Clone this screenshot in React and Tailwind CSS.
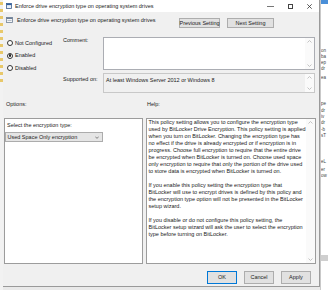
import React from "react";

const helpParas = [
  [
    "This policy setting allows you to configure the encryption type",
    "used by BitLocker Drive Encryption. This policy setting is applied",
    "when you turn on BitLocker. Changing the encryption type has",
    "no effect if the drive is already encrypted or if encryption is in",
    "progress. Choose full encryption to require that the entire drive",
    "be encrypted when BitLocker is turned on. Choose used space",
    "only encryption to require that only the portion of the drive used",
    "to store data is encrypted when BitLocker is turned on.",
  ],
  [
    "If you enable this policy setting the encryption type that",
    "BitLocker will use to encrypt drives is defined by this policy and",
    "the encryption type option will not be presented in the BitLocker",
    "setup wizard.",
  ],
  [
    "If you disable or do not configure this policy setting, the",
    "BitLocker setup wizard will ask the user to select the encryption",
    "type before turning on BitLocker.",
  ],
];

const bgFragments = [
  { y: 50, t: "on" },
  { y: 56, t: "ba" },
  { y: 62, t: "ep" },
  { y: 68, t: "dr" },
  { y: 77, t: "ea" },
  { y: 103, t: "pe" },
  { y: 110, t: "dr" },
  { y: 116, t: "iv" },
  { y: 122, t: "dr" },
  { y: 129, t: "-b" },
  { y: 135, t: "sT" },
  { y: 161, t: "eL" },
  { y: 169, t: "er" },
  { y: 175, t: "ow" },
];

function ScrollArrows({ h }) {
  return (
    <div className="w-[9px] flex flex-col justify-between items-center py-[2px] bg-[#fafafa]" style={{ height: h }}>
      <svg width="5" height="3" viewBox="0 0 5 3">
        <path d="M0.5 2.5 L2.5 0.5 L4.5 2.5" fill="none" stroke="#b5b5b5" strokeWidth="0.8" />
      </svg>
      <svg width="5" height="3" viewBox="0 0 5 3">
        <path d="M0.5 0.5 L2.5 2.5 L4.5 0.5" fill="none" stroke="#b5b5b5" strokeWidth="0.8" />
      </svg>
    </div>
  );
}

function Radio({ label, checked }) {
  return (
    <div className="flex items-center h-[7px]">
      <div className="w-[6px] h-[6px] rounded-full border border-[#333] bg-white flex items-center justify-center">
        {checked && <div className="w-[2.5px] h-[2.5px] rounded-full bg-[#222]" />}
      </div>
      <span className="ml-[2px] whitespace-nowrap">{label}</span>
    </div>
  );
}

function Btn({ children, w, primary }) {
  return (
    <div
      className={`h-[10px] flex items-center justify-center bg-[#e1e1e1] border ${
        primary ? "border-[#0078d7]" : "border-[#adadad]"
      } whitespace-nowrap`}
      style={{ width: w }}
    >
      {children}
    </div>
  );
}

export default function App() {
  return (
    <div className="w-[328px] h-[290px] overflow-hidden flex bg-[#e9e9e9] font-['Liberation_Sans',Arial,sans-serif] text-[5.5px] leading-[7px] text-[#222]">
      {/* left background strip */}
      <div className="w-[3px] h-full bg-[#f2f2f2] flex flex-col gap-[4px] pt-[2px]">
        {Array.from({ length: 12 }).map((_, i) => (
          <div key={i} className="w-[3px] h-[3px] bg-[#e8c86a]" />
        ))}
      </div>

      {/* dialog window */}
      <div className="w-[317px] h-[287px] flex flex-col bg-[#f0f0f0] border-r border-b border-[#9a9a9a]">
        {/* title bar */}
        <div className="h-[12px] bg-white flex items-center pl-[3px] shrink-0">
          <svg width="6" height="6" viewBox="0 0 6 6">
            <rect x="0.5" y="0.5" width="5" height="5" fill="#e8eef6" stroke="#3d5f8f" strokeWidth="0.8" />
            <rect x="0.5" y="0.5" width="5" height="1.6" fill="#2f5f9f" />
          </svg>
          <span className="ml-[3px] whitespace-nowrap">Enforce drive encryption type on operating system drives</span>
          <div className="ml-auto flex items-center pr-[7px]">
            <div className="w-[7px] h-[1px] bg-[#777]" />
            <div className="ml-[14px] w-[5px] h-[5px] border border-[#444]" />
            <svg className="ml-[14px]" width="5" height="5" viewBox="0 0 5 5">
              <path d="M0.3 0.3 L4.7 4.7 M4.7 0.3 L0.3 4.7" stroke="#333" strokeWidth="0.8" />
            </svg>
          </div>
        </div>

        {/* header row */}
        <div className="h-[18px] flex items-start pl-[3px] shrink-0">
          <svg className="mt-[5px]" width="7" height="6" viewBox="0 0 7 6">
            <rect x="0.5" y="0.5" width="6" height="5" fill="#f4f4f4" stroke="#6d7f96" strokeWidth="0.8" />
            <rect x="0.5" y="0.5" width="6" height="1.5" fill="#6d7f96" />
            <rect x="1.5" y="3" width="4" height="0.7" fill="#9aa6b6" />
          </svg>
          <span className="ml-[4px] mt-[4.5px] whitespace-nowrap">
            Enforce drive encryption type on operating system drives
          </span>
          <div className="ml-auto mt-[6px] flex gap-[7px] pr-[45px]">
            <Btn w={41}>Previous Setting</Btn>
            <Btn w={47}>Next Setting</Btn>
          </div>
        </div>

        {/* state + comment section */}
        <div className="flex shrink-0">
          <div className="w-[60px] flex flex-col pl-[4px] pt-[9.5px] gap-[5.5px]">
            <Radio label="Not Configured" />
            <Radio label="Enabled" checked />
            <Radio label="Disabled" />
          </div>
          <div className="flex flex-col">
            <div className="flex mt-[7px]">
              <div className="w-[40px] whitespace-nowrap">Comment:</div>
              <div className="w-[212px] h-[33px] bg-white border border-[#abadb3] flex justify-end">
                <ScrollArrows h={31} />
              </div>
            </div>
            <div className="flex mt-[3px]">
              <div className="w-[40px] mt-[3px] whitespace-nowrap">Supported on:</div>
              <div className="w-[212px] h-[20px] bg-[#f0f0f0] border border-[#c8c8c8] flex">
                <div className="flex-1 pl-[2px] pt-[3px] whitespace-nowrap">
                  At least Windows Server 2012 or Windows 8
                </div>
                <ScrollArrows h={18} />
              </div>
            </div>
          </div>
        </div>

        {/* labels */}
        <div className="flex mt-[7.5px] h-[7px] shrink-0">
          <div className="w-[144px] pl-[3px]">Options:</div>
          <div>Help:</div>
        </div>

        {/* panes */}
        <div className="flex mt-[10.5px] h-[146px] shrink-0">
          <div className="ml-[1px] w-[139px] h-full bg-white border border-[#9c9c9c] flex flex-col">
            <div className="pl-[2px] pt-[2.5px] whitespace-nowrap">Select the encryption type:</div>
            <div className="mt-[3.5px] w-[98px] h-[10px] bg-[#e5e5e5] border border-[#acacac] flex items-center pl-[1.5px] pr-[3px]">
              <span className="whitespace-nowrap">Used Space Only encryption</span>
              <svg className="ml-auto" width="4" height="3" viewBox="0 0 4 3">
                <path d="M0.3 0.6 L2 2.4 L3.7 0.6" fill="none" stroke="#555" strokeWidth="0.7" />
              </svg>
            </div>
          </div>
          <div className="ml-[3px] w-[170px] h-full bg-white border border-[#9c9c9c] flex">
            <div className="flex-1 pl-[1.5px] pt-[0px] flex flex-col gap-[7px]">
              {helpParas.map((p, i) => (
                <div key={i}>
                  {p.map((l, j) => (
                    <div key={j} className="whitespace-nowrap">
                      {l}
                    </div>
                  ))}
                </div>
              ))}
            </div>
            <ScrollArrows h={144} />
          </div>
        </div>

        {/* bottom buttons */}
        <div className="flex-1 flex items-start justify-end pr-[8px] pt-[7px] gap-[7px]">
          <div className="w-[30px] h-[13px] flex items-center justify-center bg-[#e1e1e1] border border-[#0078d7]">OK</div>
          <div className="w-[30px] h-[13px] flex items-center justify-center bg-[#e1e1e1] border border-[#adadad]">Cancel</div>
          <div className="w-[30px] h-[13px] flex items-center justify-center bg-[#e1e1e1] border border-[#adadad]">Apply</div>
        </div>
      </div>

      {/* right background window */}
      <div className="flex-1 h-full relative bg-white overflow-hidden border-l border-[#c9c9c9]">
        <div className="h-[4px] bg-[#4a8fd8]" />
        {bgFragments.map((f, i) => (
          <div key={i} className="absolute left-0 whitespace-nowrap text-[4.5px] text-[#444]" style={{ top: f.y - 3 }}>
            {f.t}
          </div>
        ))}
        <div className="absolute left-0 top-[255px] w-full h-[6px] bg-[#cfcfcf]" />
      </div>
    </div>
  );
}
